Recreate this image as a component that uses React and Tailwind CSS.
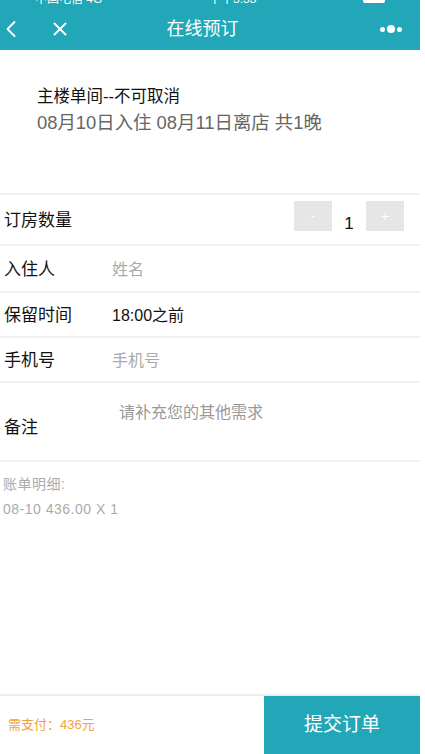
import { ChevronLeft, X } from "lucide-react";

const font = { fontFamily: '"Liberation Sans", "Noto Sans CJK SC", sans-serif' };

function Row({ label, children, className = "h-[48px]" }) {
  return (
    <div className={`flex items-center pt-[3px] border-b-2 border-[#f0f0f0] ${className}`}>
      <div className="w-[112px] pl-[4px] text-[17px] text-[#111]">{label}</div>
      {children}
    </div>
  );
}

export default function App() {
  return (
    <div className="w-[425px] h-[754px] bg-white flex" style={font}>
      <div className="w-[420px] h-full flex flex-col">
        {/* header */}
        <div className="bg-[#21a7b7] h-[50px] flex flex-col">
          <div className="h-[6px] overflow-hidden flex justify-between px-[35px] text-white text-[12px] leading-none">
            <span className="-mt-[7px]">中国电信 4G</span>
            <span className="-mt-[7px]">下午3:33</span>
            <span className="-mt-[7px] w-[22px] h-[10px] bg-white rounded-[2px]" />
          </div>
          <div className="flex-1 flex items-center text-white pt-[2px]">
            <ChevronLeft className="w-[28px] h-[28px] ml-[-3px]" strokeWidth={1.6} />
            <X className="w-[22px] h-[22px] ml-[24px]" strokeWidth={2} />
            <div className="flex-1 text-center text-[18px] pr-[46px]">在线预订</div>
            <div className="flex items-center gap-[2px] mr-[18px]">
              <span className="w-[5px] h-[5px] rounded-full bg-white" />
              <span className="w-[8px] h-[8px] rounded-full bg-white" />
              <span className="w-[5px] h-[5px] rounded-full bg-white" />
            </div>
          </div>
        </div>

        {/* room info */}
        <div className="h-[145px] border-b-2 border-[#f0f0f0] pl-[37px] pt-[35px]">
          <div className="text-[16.5px] text-[#111] leading-[22px]">主楼单间--不可取消</div>
          <div className="text-[18.4px] text-[#666] leading-[26px] mt-[3px]">08月10日入住 08月11日离店 共1晚</div>
        </div>

        <Row label="订房数量" className="h-[51px]">
          <div className="flex-1 flex justify-end items-center pr-[16px]">
            <div className="w-[38px] h-[30px] bg-[#e6e6e6] text-white text-[14px] flex items-center justify-center self-start -mt-[4px]">-</div>
            <span className="w-[34px] text-center text-[17px] text-[#111] mt-[6px]">1</span>
            <div className="w-[38px] h-[30px] bg-[#e6e6e6] text-white text-[14px] flex items-center justify-center self-start -mt-[4px]">+</div>
          </div>
        </Row>
        <Row label="入住人" className="h-[47px]">
          <span className="text-[16px] text-[#aaa]">姓名</span>
        </Row>
        <Row label="保留时间" className="h-[45px]">
          <span className="text-[16px] text-[#111]">18:00之前</span>
        </Row>
        <Row label="手机号" className="h-[45px]">
          <span className="text-[16px] text-[#aaa]">手机号</span>
        </Row>
        <div className="h-[79px] flex border-b-2 border-[#f0f0f0]">
          <div className="w-[119px] pl-[4px] pt-[32px] text-[17px] text-[#111]">备注</div>
          <div className="pt-[18px] text-[16px] text-[#999]">请补充您的其他需求</div>
        </div>

        {/* bill */}
        <div className="pl-[3px] pt-[10px] text-[14px] tracking-[0.5px] text-[#aaa] leading-[25px]">
          <div>账单明细:</div>
          <div>08-10 436.00 X 1</div>
        </div>

        {/* bottom bar */}
        <div className="mt-auto h-[60px] border-t-2 border-[#eee] flex">
          <div className="flex-1 flex items-center pl-[8px] text-[13px] text-[#f3a33c]">需支付：436元</div>
          <button className="w-[156px] bg-[#21a7b7] text-white text-[19px]">提交订单</button>
        </div>
      </div>
    </div>
  );
}
